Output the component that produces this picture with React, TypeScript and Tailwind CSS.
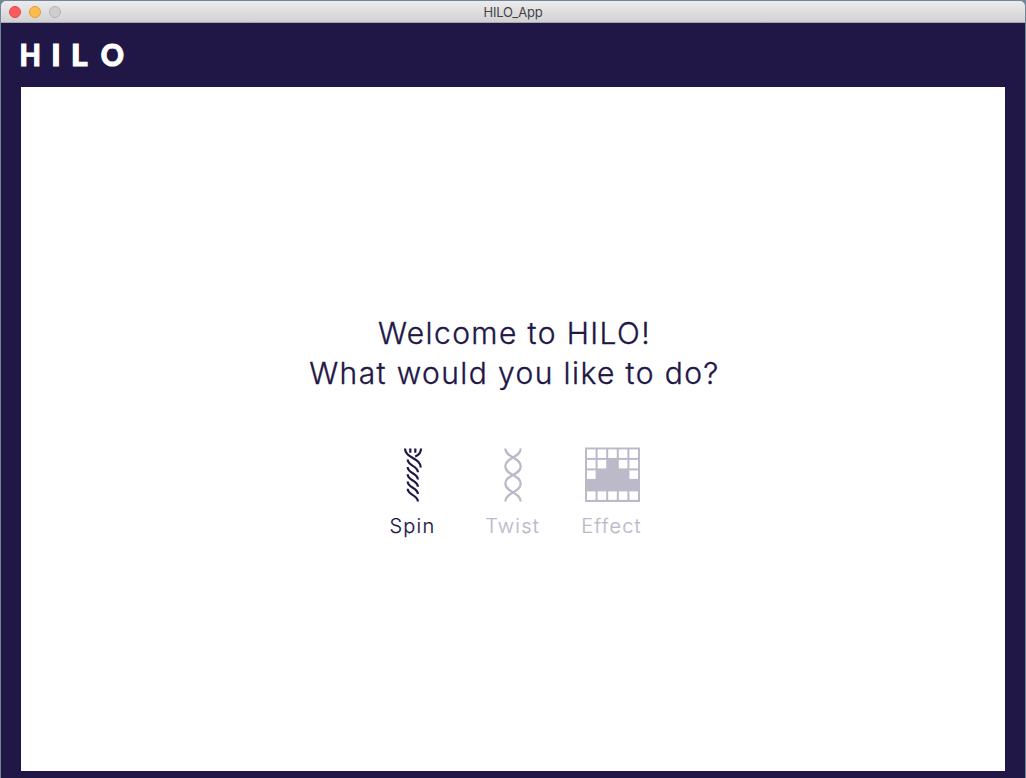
import type { ReactNode } from "react";

function Logo() {
  return (
    <h1 className="h-[23px] leading-none">
      <svg
        width="106"
        height="23"
        viewBox="0 0 106 23"
        overflow="visible"
        className="block fill-white stroke-white font-['Lato'] text-[31px] font-black"
        strokeWidth="1.1"
      >
        <text x="-1.4" y="22.8" textLength="21.4" lengthAdjust="spacingAndGlyphs">H</text>
        <text x="30.2" y="22.8">I</text>
        <text x="50" y="22.8" textLength="16.5" lengthAdjust="spacingAndGlyphs">L</text>
        <text x="79.7" y="22.8" textLength="23.2" lengthAdjust="spacingAndGlyphs">O</text>
      </svg>
    </h1>
  );
}

function TitleBar() {
  return (
    <header className="grid h-[22px] grid-cols-3 items-center rounded-t-[5px] border-b border-[#aaa8ad] bg-linear-to-b from-[#ececec] to-[#d2d2d2] pl-2">
      <div className="flex gap-2">
        <span className="size-3 rounded-full border border-[#e2474b] bg-[#fc5b5e]" />
        <span className="size-3 rounded-full border border-[#e09e3a] bg-[#fdbc4b]" />
        <span className="size-3 rounded-full border border-[#b5b5b5] bg-[#cecece]" />
      </div>
      <div className="-ml-2 pt-px text-center text-[13px] leading-4 tracking-[-0.15px] text-[#454545]">HILO_App</div>
    </header>
  );
}

function SpinIcon() {
  return (
    <svg width="20" height="56" viewBox="0 0 20 56" fill="none" stroke="#211747" strokeWidth="2.2">
      <path d="M2 1.5C2 11.5 17.7 10.5 17.7 20.5M18 1.5C18 6 16 8 12.2 9.5M7.3 1.5v4.3M12.3 1.5v4.3" />
      <path d="M4.7 12.6C4.7 19.4 14.9 18.4 14.9 25.2M4.7 19.9C4.7 26.7 14.9 25.7 14.9 32.5M4.7 27.2C4.7 34 14.9 33 14.9 39.8M4.7 34.5C4.7 41.3 14.9 40.3 14.9 47.1M4.7 41.8C4.7 48.6 14.9 47.6 14.9 54.4" />
    </svg>
  );
}

function TwistIcon() {
  return (
    <svg width="20" height="56" viewBox="0 0 20 56" fill="none" stroke="#bcb9c9" strokeWidth="2.2">
      <path d="M2.3 1.5C2.3 10.7 17.7 10.2 17.7 19.3S2.3 27.5 2.3 36.5S17.7 45.3 17.7 54.5" />
      <path d="M17.7 1.5C17.7 10.7 2.3 10.2 2.3 19.3S17.7 27.5 17.7 36.5S2.3 45.3 2.3 54.5" />
    </svg>
  );
}

const openCells = [
  [0, 0], [1, 0], [2, 0], [3, 0], [4, 0],
  [0, 1], [1, 1], [3, 1], [4, 1],
  [0, 2], [4, 2],
  [0, 4], [1, 4], [2, 4], [3, 4], [4, 4],
];

function EffectIcon() {
  return (
    <svg width="55" height="55" viewBox="0 0 55 55">
      <path d="M0 .5h55V55H0z" fill="#bcb9c9" />
      {openCells.map(([x, y]) => (
        <rect key={`${x}-${y}`} x={2 + x * 10.6} y={2.4 + y * 10.5} width="8.6" height="8.5" fill="#fff" />
      ))}
    </svg>
  );
}

type ActionProps = { label: string; active?: boolean; className: string; children: ReactNode };

function Action({ label, active = false, className, children }: ActionProps) {
  return (
    <button className={`flex flex-col items-center ${className} ${active ? "text-[#211747]" : "text-[#bcb9c9]"}`}>
      <span className="flex h-14">{children}</span>
      <span className="mt-[9px] mr-px text-xl leading-7 font-light tracking-[1.2px] whitespace-nowrap [-webkit-text-stroke:0.2px_currentColor]">{label}</span>
    </button>
  );
}

export default function App() {
  return (
    <div className="h-[778px] w-[1026px] overflow-hidden bg-[#718797] pt-px pr-px pl-px font-['Inter',sans-serif]">
      <TitleBar />
      <div className="flex h-[755px] flex-col bg-[#211747] px-5 pt-5 pb-[7px]">
        <Logo />
        <main className="mt-[21px] flex flex-1 flex-col items-center bg-white pt-[226px]">
          <h2 className="pl-[3px] text-center text-[30px] leading-10 font-light tracking-[1.4px] whitespace-nowrap text-[#211747] [-webkit-text-stroke:0.35px_currentColor]">
            Welcome to HILO!
            <br />
            What would you like to do?
          </h2>
          <nav className="mt-[54px] mr-0.5 flex">
            <Action label="Spin" active className="w-[100px]"><SpinIcon /></Action>
            <Action label="Twist" className="w-[100px]"><TwistIcon /></Action>
            <Action label="Effect" className="w-[98px]"><EffectIcon /></Action>
          </nav>
        </main>
      </div>
    </div>
  );
}
